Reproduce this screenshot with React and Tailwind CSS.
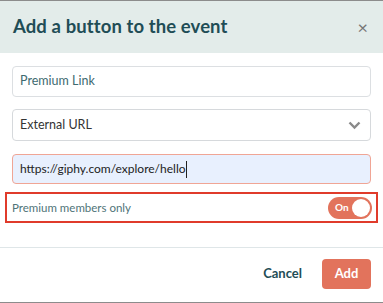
export default function App() {
  return (
    <div
      className="w-[383px] h-[303px] bg-white border-t border-b border-[#8c8c8c] flex flex-col overflow-hidden"
      style={{ fontFamily: 'Lato, "Open Sans", sans-serif' }}
    >
      <div className="h-[52px] bg-[#e3ecea] flex items-center justify-between pl-[13px] pr-[12px] shrink-0">
        <h1 className="text-[18.5px] font-bold text-[#1f4d56] tracking-[0.1px]">Add a button to the event</h1>
        <button className="text-[#777] text-[18px] leading-none mr-[3px]">×</button>
      </div>

      <div className="px-[12px] pt-[13px] flex flex-col">
        <div className="h-[31px] border border-[#dcdfe2] rounded-[4px] flex items-center px-[7px] text-[12.5px] text-[#3e6a70]">
          Premium Link
        </div>
        <div className="h-[32px] mt-[12px] border border-[#d6d9dc] rounded-[4px] flex items-center justify-between px-[7px] text-[12.5px] text-[#333]">
          <span>External URL</span>
          <svg width="13" height="9" viewBox="0 0 13 9" className="mr-[2px]">
            <path d="M1.5 1.5 L6.5 6.5 L11.5 1.5" fill="none" stroke="#8a8a8a" strokeWidth="2.4" />
          </svg>
        </div>
        <div className="h-[30px] mt-[13px] border border-[#f0a595] bg-[#e8f0fe] rounded-[4px] flex items-center px-[7px] text-[12px] text-[#222]">
          <span>https://giphy.com/explore/hello</span>
          <span className="w-px h-[17px] bg-[#222]"></span>
        </div>
      </div>

      <div className="mx-[5px] mt-[8px] h-[31px] border-2 border-[#e03b2b] flex items-center justify-between pl-[5px] pr-[4px]">
        <span className="text-[11.5px] text-[#4f7478]">Premium members only</span>
        <div className="w-[44px] h-[22px] rounded-full bg-[#e2735c] flex items-center justify-between pl-[7px] pr-[2px]">
          <span className="text-[10px] font-bold text-white">On</span>
          <span className="w-[18px] h-[18px] rounded-full bg-white"></span>
        </div>
      </div>

      <div className="mt-[24px] border-t border-[#dfe6e8] flex-1 flex items-center justify-end gap-[20px] pr-[12px] pb-[2px]">
        <button className="text-[13px] font-bold text-[#1f4d56]">Cancel</button>
        <button className="w-[49px] h-[30px] rounded-[4px] bg-[#e2735c] text-white text-[13px] font-bold">Add</button>
      </div>
    </div>
  )
}
